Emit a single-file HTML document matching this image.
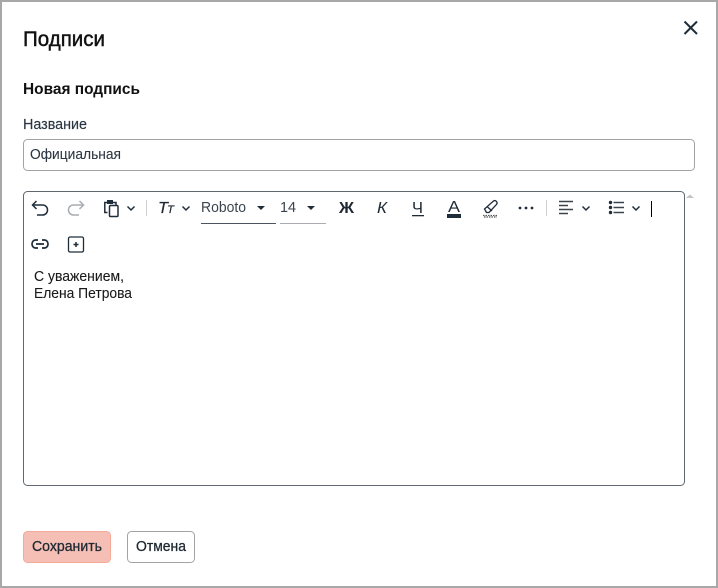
<!DOCTYPE html>
<html><head><meta charset="utf-8"><style>
html,body{margin:0;padding:0;background:#fff;width:718px;height:588px;overflow:hidden}
svg{display:block}
text{font-family:"Liberation Sans",sans-serif;font-size:14px;fill:#1f2933}
</style></head><body>
<svg width="718" height="588" viewBox="0 0 718 588" xmlns="http://www.w3.org/2000/svg">
<rect x="1" y="1" width="716" height="586" fill="#fff" stroke="#a8a8a8" stroke-width="2"/>
<text x="23" y="46" textLength="82" lengthAdjust="spacingAndGlyphs" style="font-size:21px;fill:#111;stroke:#111;stroke-width:.45">Подписи</text>
<path d="M684.500 21.500L697 34M697 21.500L684.500 34" stroke="#1f2d3a" stroke-width="2" fill="none"/>
<text x="23" y="94" textLength="117" lengthAdjust="spacingAndGlyphs" style="font-size:16px;font-weight:bold;fill:#111">Новая подпись</text>
<text x="23" y="129" textLength="64" lengthAdjust="spacingAndGlyphs" style="font-size:15px;fill:#2b3642;stroke:#2b3642;stroke-width:.15">Название</text>
<rect x="23.500" y="139.500" width="671" height="31" rx="4" fill="#fff" stroke="#a3a3a3"/>
<text x="30" y="159" textLength="91" lengthAdjust="spacingAndGlyphs" style="font-size:15px;fill:#2b3642;stroke:#2b3642;stroke-width:.1">Официальная</text>
<rect x="23.500" y="191.500" width="661" height="294" rx="4" fill="#fff" stroke="#5f6871"/>
<path d="M686 198L690 194.500L694 198Z" fill="#c4c4c4"/>
<g fill="none" stroke="#1f2d3a" stroke-width="1.500">
<path d="M36.500 201L32.500 205L36.500 209M33 205H42.500C45.500 205 47.500 207.200 47.500 210C47.500 212.800 45.500 215 42.500 215H37"/>
<path stroke="#a9adb1" d="M79.500 201L83.500 205L79.500 209M83 205H73.500C70.500 205 68.500 207.200 68.500 210C68.500 212.800 70.500 215 73.500 215H79"/>
<path d="M107.500 212.500H104.800V202.500H107M113 202.500H116V205"/>
<rect x="107" y="200" width="6" height="4" fill="#1f2d3a" stroke="none"/>
<rect x="109.500" y="205.500" width="8.500" height="11" rx="1"/>
<path d="M127.500 206.500L131 210L134.500 206.500"/>
<path d="M182.500 206.500L186 210L189.500 206.500"/>
<path d="M582.500 206.500L586 210L589.500 206.500"/>
<path d="M632.500 206.500L636 210L639.500 206.500"/>
<path d="M559 201.500H573M559 205.500H568M559 209.500H573M559 213.500H568" stroke="#3a444e" stroke-width="1.600"/>
<path d="M613.500 202.500H624M613.500 207.500H624M613.500 212.500H624" stroke="#3a444e" stroke-width="1.600"/>
<path d="M38 240H35.500C33.500 240 32 241.800 32 244C32 246.200 33.500 248 35.500 248H38M42 240H44.500C46.500 240 48 241.800 48 244C48 246.200 46.500 248 44.500 248H42M36 244H44" stroke-width="1.700"/>
<rect x="68.500" y="237" width="15" height="15" rx="1.500" stroke-width="1.300"/>
<path d="M76 242V247M73.500 244.500H78.500" stroke-width="1.500"/>
<path d="M486.500 212.500L484.500 209L493.500 201C494.500 200.200 495.500 200.500 496.500 201.500C497.300 202.500 497.300 203.500 496.500 204.500L489 212.500ZM487 206.500L492 211" stroke-width="1.300"/>
</g>
<g fill="#1f2d3a">
<circle cx="520" cy="208" r="1.400"/><circle cx="526" cy="208" r="1.400"/><circle cx="532" cy="208" r="1.400"/>
<circle cx="610.500" cy="202.500" r="1.700"/><circle cx="610.500" cy="207.500" r="1.700"/><circle cx="610.500" cy="212.500" r="1.700"/>
<path d="M257 206H265L261 210Z"/><path d="M307 206H315L311 210Z"/>
<rect x="447" y="214" width="14" height="4"/>
<rect x="412" y="215" width="12" height="1.300"/>
</g>
<path d="M483 215.500H497M484 217H497" stroke="#555" stroke-width="1.300" stroke-dasharray="1.500 1"/>
<path d="M146.500 200V216M546.500 200V216" stroke="#cfcfcf"/>
<path d="M651.500 201V217" stroke="#000"/>
<path d="M201 223.500H276" stroke="#4a5560"/>
<path d="M280 223.500H326" stroke="#a9adb1"/>
<text x="158" y="213" textLength="10" lengthAdjust="spacingAndGlyphs" style="font-size:16px;font-style:italic;stroke:#1f2933;stroke-width:.2">T</text>
<text x="167" y="213" textLength="7" lengthAdjust="spacingAndGlyphs" style="font-size:11px;font-style:italic;stroke:#1f2933;stroke-width:.2">T</text>
<text x="201" y="212" textLength="45" lengthAdjust="spacingAndGlyphs" style="font-size:15px;fill:#3a444e">Roboto</text>
<text x="280" y="212" textLength="16" lengthAdjust="spacingAndGlyphs" style="font-size:15px;fill:#3a444e">14</text>
<text x="339" y="213" textLength="15" lengthAdjust="spacingAndGlyphs" style="font-size:16px;font-weight:bold">Ж</text>
<text x="377" y="213" textLength="10" lengthAdjust="spacingAndGlyphs" style="font-size:16px;font-style:italic">К</text>
<text x="412" y="213" textLength="11" lengthAdjust="spacingAndGlyphs" style="font-size:16px">Ч</text>
<text x="448" y="212" textLength="12" lengthAdjust="spacingAndGlyphs" style="font-size:16px">А</text>
<text x="34" y="281" textLength="90" lengthAdjust="spacingAndGlyphs" style="font-size:15px;fill:#1a1a1a;stroke:#1a1a1a;stroke-width:.1">С уважением,</text>
<text x="34" y="298" textLength="98" lengthAdjust="spacingAndGlyphs" style="font-size:15px;fill:#1a1a1a;stroke:#1a1a1a;stroke-width:.1">Елена Петрова</text>
<rect x="23.500" y="531.500" width="87" height="31" rx="4" fill="#f6bfb5" stroke="#f4a999"/>
<text x="32" y="551" textLength="70" lengthAdjust="spacingAndGlyphs" style="font-size:15px;fill:#1f2933;stroke:#1f2933;stroke-width:.3">Сохранить</text>
<rect x="127.500" y="531.500" width="67" height="31" rx="4" fill="#fff" stroke="#a3a3a3"/>
<text x="136" y="551" textLength="50" lengthAdjust="spacingAndGlyphs" style="font-size:15px;fill:#1f2933;stroke:#1f2933;stroke-width:.3">Отмена</text>
</svg>
</body></html>
